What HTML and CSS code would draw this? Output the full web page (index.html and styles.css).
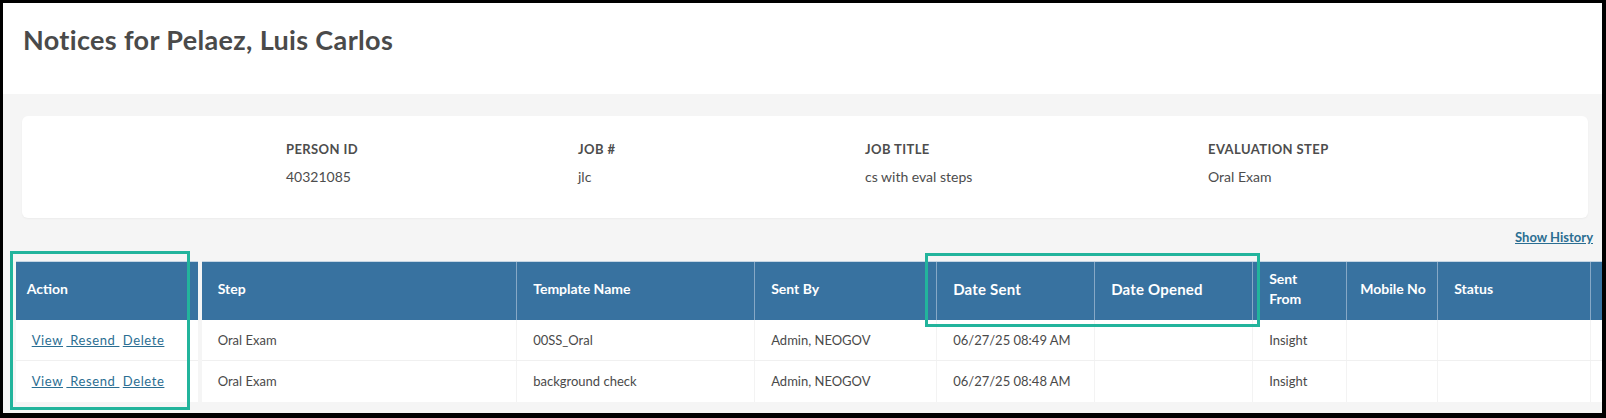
FILE: index.html
```html
<!DOCTYPE html>
<html lang="en">
<head>
    <meta charset="UTF-8">
    <meta name="viewport" content="width=device-width, initial-scale=1.0">
    <title>Notices for Pelaez, Luis Carlos</title>
    <link rel="stylesheet" href="styles.css">
</head>
<body>
    <div class="frame">
        <header class="page-head">
            <h1>Notices for Pelaez, Luis Carlos</h1>
        </header>

        <main class="content">
            <section class="info-card">
                <div class="info-item">
                    <div class="info-label">PERSON ID</div>
                    <div class="info-value">40321085</div>
                </div>
                <div class="info-item">
                    <div class="info-label">JOB #</div>
                    <div class="info-value">jlc</div>
                </div>
                <div class="info-item">
                    <div class="info-label">JOB TITLE</div>
                    <div class="info-value">cs with eval steps</div>
                </div>
                <div class="info-item">
                    <div class="info-label">EVALUATION STEP</div>
                    <div class="info-value">Oral Exam</div>
                </div>
            </section>

            <div class="history-row">
                <a href="#" class="history-link">Show History</a>
            </div>

            <div class="grid-wrap">
                <table class="grid grid-action">
                    <thead>
                        <tr><th>Action</th></tr>
                    </thead>
                    <tbody>
                        <tr><td class="actions"><a href="#">View</a> <a href="#">&nbsp;Resend&nbsp;</a> <a href="#">Delete</a></td></tr>
                        <tr><td class="actions"><a href="#">View</a> <a href="#">&nbsp;Resend&nbsp;</a> <a href="#">Delete</a></td></tr>
                    </tbody>
                </table>

                <table class="grid grid-main">
                    <colgroup>
                        <col class="c-step">
                        <col class="c-template">
                        <col class="c-sentby">
                        <col class="c-date">
                        <col class="c-date">
                        <col class="c-from">
                        <col class="c-mobile">
                        <col class="c-status">
                        <col class="c-extra">
                    </colgroup>
                    <thead>
                        <tr>
                            <th>Step</th>
                            <th>Template Name</th>
                            <th>Sent By</th>
                            <th class="th-date">Date Sent</th>
                            <th class="th-date">Date Opened</th>
                            <th>Sent From</th>
                            <th class="th-mobile">Mobile No</th>
                            <th>Status</th>
                            <th></th>
                        </tr>
                    </thead>
                    <tbody>
                        <tr>
                            <td>Oral Exam</td>
                            <td>00SS_Oral</td>
                            <td>Admin, NEOGOV</td>
                            <td>06/27/25 08:49 AM</td>
                            <td></td>
                            <td>Insight</td>
                            <td></td>
                            <td></td>
                            <td></td>
                        </tr>
                        <tr>
                            <td>Oral Exam</td>
                            <td>background check</td>
                            <td>Admin, NEOGOV</td>
                            <td>06/27/25 08:48 AM</td>
                            <td></td>
                            <td>Insight</td>
                            <td></td>
                            <td></td>
                            <td></td>
                        </tr>
                    </tbody>
                </table>

                <div class="mark mark-action"></div>
                <div class="mark mark-dates"></div>
            </div>
        </main>
    </div>
</body>
</html>
```

FILE: styles.css
```css
:root { --blue: #3872a0; --blue-line: #86a8c6; --teal: #22b49c; --text: #4a4a4a; --link: #2b6e92; --page: #f5f5f5; --row-line: #f0f0f0; }
* { box-sizing: border-box; }
body { margin: 0; background: #000; font-family: Lato, 'Open Sans', Arial, sans-serif; color: var(--text); }
.frame { margin: 3px 4px 5px 3px; height: 410px; background: var(--page); overflow: hidden; }

.page-head { background: white; height: 91px; padding: 21px 0 0 20px; }
.page-head h1 { margin: 0; font-size: 27px; line-height: 32px; font-weight: 700; color: #4a4a4a; letter-spacing: 0.35px; }

.content { padding-top: 22px; }
.info-card { margin-left: 19px; width: 1566px; height: 102px; background: white; border-radius: 6px; box-shadow: 0 1px 2px rgba(0,0,0,0.04); padding: 24px 0 0 264px; display: grid; grid-template-columns: 292px 287px 343px auto; }
.info-label { font-size: 13px; line-height: 18px; font-weight: 700; color: #4d4d4d; letter-spacing: 0.4px; }
.info-value { margin-top: 10px; font-size: 14px; line-height: 18px; color: #4d4d4d; }

.history-row { display: flex; justify-content: flex-end; width: 1590px; margin-top: 11px; }
.history-link { font-size: 13px; line-height: 16px; font-weight: 700; color: var(--link); }

.grid-wrap { position: relative; display: flex; gap: 4px; margin-top: 16px; padding-left: 12.7px; }
.grid { flex: none; border-collapse: collapse; table-layout: fixed; background: white; }
.grid th { background: var(--blue); color: white; font-size: 14px; font-weight: 700; text-align: left; height: 58px; padding: 0 16px 3px; line-height: 20px; border-top: 1px solid #c5d5e3; border-left: 1px solid var(--blue-line); }
.grid th:first-child { border-left: none; }
.grid td { height: 41px; padding: 0 16px; font-size: 13px; color: var(--text); border-bottom: 1px solid var(--row-line); border-left: 1px solid #f3f3f3; white-space: nowrap; }
.grid td:first-child { border-left: none; }
.grid tbody tr:last-child td { border-bottom: none; }

.grid-action { width: 182px; }
.grid-action th { padding-left: 11px; }
.actions a { color: var(--link); font-size: 13px; letter-spacing: 0.6px; }

.grid-main { width: 1510px; }
.c-step { width: 315px; }
.c-template { width: 238px; }
.c-sentby { width: 182px; }
.c-date { width: 158px; }
.c-from { width: 94px; }
.c-mobile { width: 91px; }
.c-status { width: 153px; }
.c-extra { width: 121px; }
.grid th.th-date { font-size: 15px; letter-spacing: 0.2px; }
.grid th.th-mobile { padding: 0 2px 3px 13px; white-space: nowrap; }

.mark { position: absolute; border: 3px solid var(--teal); pointer-events: none; }
.mark-action { left: 7px; top: -10px; width: 180px; height: 159px; }
.mark-dates { left: 922px; top: -8px; width: 335px; height: 74px; }
```
